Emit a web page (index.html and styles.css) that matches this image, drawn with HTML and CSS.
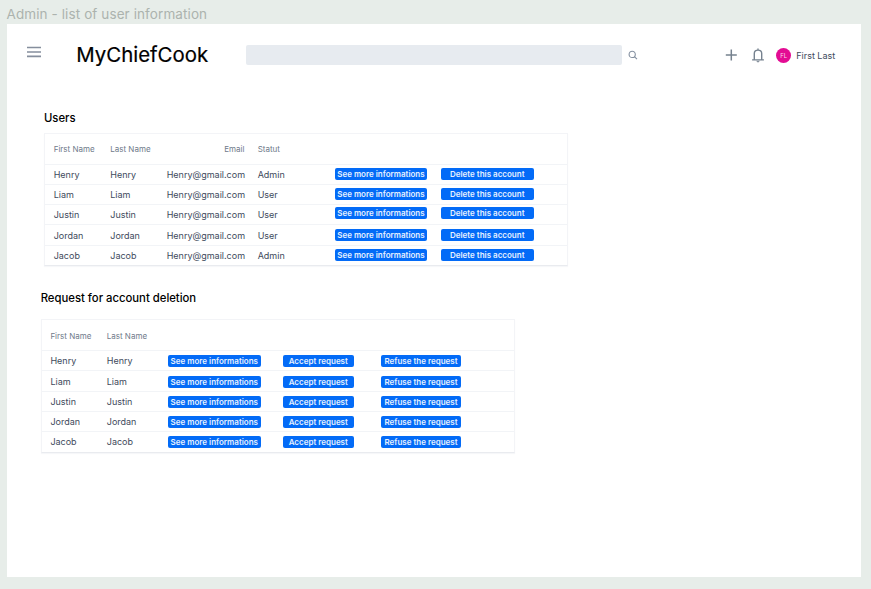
FILE: index.html
```
<!DOCTYPE html>
<html lang="en">
<head>
<meta charset="utf-8">
<title>Admin - list of user information</title>
<link rel="stylesheet" href="styles.css">
</head>
<body>
<div class="label">Admin - list of user information</div>
<main class="frame">
  <header class="topbar">
    <svg class="menu" width="14" height="12" viewBox="0 0 14 12" fill="none" stroke="#858e9d" stroke-width="1.6"><path d="M0 1.5h14M0 6h14M0 10.4h14"/></svg>
    <div class="brand">MyChiefCook</div>
    <div class="search"></div>
    <svg class="lens" width="10" height="10" viewBox="0 0 10 10" fill="none" stroke="#8490a0" stroke-width="1.1"><circle cx="4.2" cy="4.4" r="3.1"/><path d="M6.4 6.6L9 9.2"/></svg>
    <svg class="plus" width="12" height="12" viewBox="0 0 12 12" fill="none" stroke="#76828f" stroke-width="1.5"><path d="M6.3 .5v11M.8 6h11"/></svg>
    <svg class="bell" width="12" height="15" viewBox="0 0 12 15" fill="none" stroke="#76828f" stroke-width="1.4"><path d="M2.3 11.8V5.6C2.3 3.3 3.8 2.1 6 2.1s3.7 1.2 3.7 3.5v6.2M.1 11.9h11.8M6 2V.5"/><path d="M4.7 13.2h2.6L6 14.2z" fill="#76828f" stroke-width=".6"/></svg>
    <div class="avatar">FL</div>
    <div class="name">First Last</div>
  </header>

  <section class="users">
    <h2>Users</h2>
    <div class="table">
      <div class="row head"><span>First Name</span><span>Last Name</span><span class="email">Email</span><span>Statut</span></div>
      <div class="row"><span>Henry</span><span>Henry</span><span class="email">Henry@gmail.com</span><span>Admin</span><button>See more informations</button><button>Delete this account</button></div>
      <div class="row raised"><span>Liam</span><span>Liam</span><span class="email">Henry@gmail.com</span><span>User</span><button>See more informations</button><button>Delete this account</button></div>
      <div class="row high"><span>Justin</span><span>Justin</span><span class="email">Henry@gmail.com</span><span>User</span><button>See more informations</button><button>Delete this account</button></div>
      <div class="row"><span>Jordan</span><span>Jordan</span><span class="email">Henry@gmail.com</span><span>User</span><button>See more informations</button><button>Delete this account</button></div>
      <div class="row raised"><span>Jacob</span><span>Jacob</span><span class="email">Henry@gmail.com</span><span>Admin</span><button>See more informations</button><button>Delete this account</button></div>
    </div>
  </section>

  <section class="requests">
    <h2>Request for account deletion</h2>
    <div class="table">
      <div class="row head"><span>First Name</span><span>Last Name</span></div>
      <div class="row"><span>Henry</span><span>Henry</span><button>See more informations</button><button>Accept request</button><button>Refuse the request</button></div>
      <div class="row"><span>Liam</span><span>Liam</span><button>See more informations</button><button>Accept request</button><button>Refuse the request</button></div>
      <div class="row lowered"><span>Justin</span><span>Justin</span><button>See more informations</button><button>Accept request</button><button>Refuse the request</button></div>
      <div class="row"><span>Jordan</span><span>Jordan</span><button>See more informations</button><button>Accept request</button><button>Refuse the request</button></div>
      <div class="row"><span>Jacob</span><span>Jacob</span><button>See more informations</button><button>Accept request</button><button>Refuse the request</button></div>
    </div>
  </section>
</main>
</body>
</html>
```
FILE: styles.css
```
* { box-sizing: border-box; }
body {
  margin: 0;
  height: 589px;
  overflow: hidden;
  background: #e7ede9;
  font-family: Inter, "Liberation Sans", sans-serif;
  color: #3e4a5c;
}
.label {
  height: 24px;
  padding: 5px 0 0 6.5px;
  font-size: 13.5px;
  line-height: 18px;
  letter-spacing: 0.1px;
  color: #acb3ae;
  white-space: nowrap;
}
.frame {
  width: 853.5px;
  height: 553px;
  margin-left: 7.4px;
  background: #fff;
}
.topbar {
  display: flex;
  align-items: center;
  height: 62px;
  padding-left: 19.5px;
  white-space: nowrap;
}
.topbar svg { flex: none; }
.menu { margin-top: -6px; }
.brand {
  width: 169.6px;
  margin-left: 35.4px;
  font-size: 20.4px;
  line-height: 26px;
  color: #000;
  -webkit-text-stroke: 0.2px #000;
}
.search {
  width: 376px;
  height: 20px;
  border-radius: 2px;
  background: #e7ebf0;
}
.lens { margin-left: 6px; }
.plus { margin-left: 87px; }
.bell { margin-left: 15px; }
.avatar {
  width: 15px;
  height: 15px;
  margin-left: 12.4px;
  border-radius: 50%;
  background: #e30c93;
  color: #fbd5ec;
  font-size: 6px;
  line-height: 15px;
  text-align: center;
}
.name {
  margin: 2px 0 0 5px;
  font-size: 9px;
  line-height: 12px;
}
h2 {
  margin: 0;
  font-size: 11.3px;
  line-height: 16px;
  font-weight: 500;
  color: #000;
}
.users { width: 524px; margin: 24px 0 0 36.6px; }
.requests { width: 474.6px; margin: 23.6px 0 0 33.3px; }
.table {
  margin-top: 6.6px;
  border: 1px solid #f3f4f7;
  border-bottom-color: #e9ebef;
  box-shadow: 0 1px 1px #f6f7f9;
}
.requests .table { margin-top: 13.4px; }
.row {
  display: grid;
  grid-template-columns: 56.6px 56.4px 77.8px 90.2px 106.3px 92.6px;
  align-items: center;
  height: 20.3px;
  padding-left: 8.7px;
  font-size: 9px;
  line-height: 12px;
  white-space: nowrap;
}
.requests .row { grid-template-columns: 56.4px 61.2px 115px 98px 80px; }
.row + .row { border-top: 1px solid #f2f4f7; }
.row.head { height: 30px; font-size: 8px; color: #6f7a8a; }
.row span { padding-top: 1px; }
.email { text-align: right; }
.email + span { padding-left: 13.2px; }
button {
  width: 92.6px;
  height: 12px;
  margin: 0;
  padding: 0;
  border: 0;
  border-radius: 2px;
  background: #036bf7;
  color: #e6f1ff;
  font: 600 8px/12px Inter, "Liberation Sans", sans-serif;
  text-align: center;
  white-space: nowrap;
}
.users button { margin-top: 0.5px; }
.requests button { margin-top: 1px; }
.requests button:nth-child(4) { width: 70.6px; }
.requests button:nth-child(5) { width: 80px; }
.raised button { margin-bottom: 2px; }
.high button { margin-bottom: 4px; }
.requests .lowered button { margin-top: 2px; }
```
